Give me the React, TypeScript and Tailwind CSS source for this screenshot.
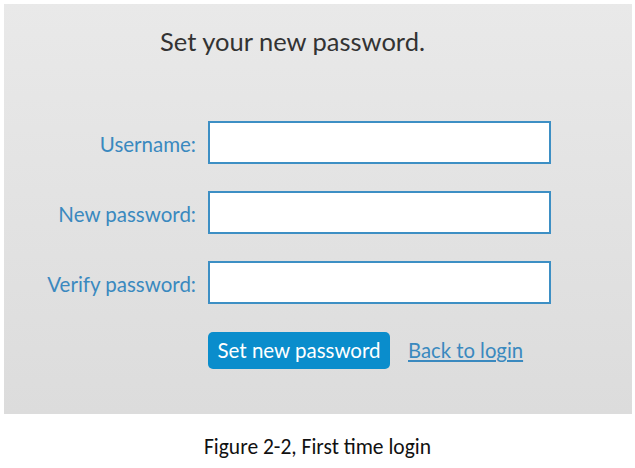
export default function App() {
  const fields = [
    { id: "username", label: "Username:", type: "text" },
    { id: "new_password", label: "New password:", type: "password" },
    { id: "verify_password", label: "Verify password:", type: "password" },
  ];

  return (
    <div className="w-[635px] h-[468px] bg-white flex flex-col">
      <div
        className="mx-[4px] mt-[4px] w-[628px] h-[410px] bg-gradient-to-b from-[#e9e9e9] to-[#dcdcdc] flex flex-col"
        style={{ fontFamily: "Lato, 'Open Sans', sans-serif" }}
      >
        <h1 className="pl-[156px] pt-[21px] text-[25.5px] leading-[32px] text-[#333333]">
          Set your new password.
        </h1>

        <form className="mt-[64px] grid grid-cols-[192px_343px] gap-x-[12px] gap-y-[27px] items-center">
          {fields.map((f) => (
            <div key={f.id} className="contents">
              <label htmlFor={f.id} className="text-right text-[20.5px] leading-[26px] pt-[3px] text-[#3a89bf]">
                {f.label}
              </label>
              <input
                id={f.id}
                name={f.id}
                type={f.type}
                className="h-[43px] w-[343px] bg-white border-2 border-[#3d8fc4] outline-none px-2"
              />
            </div>
          ))}
          <div />
          <div className="flex items-center gap-[18px] mt-[1px]">
            <button
              type="button"
              className="h-[37px] w-[182px] rounded-[5px] bg-[#0a8dcc] text-white text-[20.5px]"
            >
              Set new password
            </button>
            <a href="#" className="text-[20.3px] text-[#3a89bf] underline underline-offset-2">
              Back to login
            </a>
          </div>
        </form>
      </div>

      <p
        className="mt-[20px] text-center text-[21.5px] leading-[26px] text-[#111111]"
        style={{ fontFamily: "Calibri, Carlito, 'Open Sans', sans-serif" }}
      >
        Figure 2-2, First time login
      </p>
    </div>
  );
}
